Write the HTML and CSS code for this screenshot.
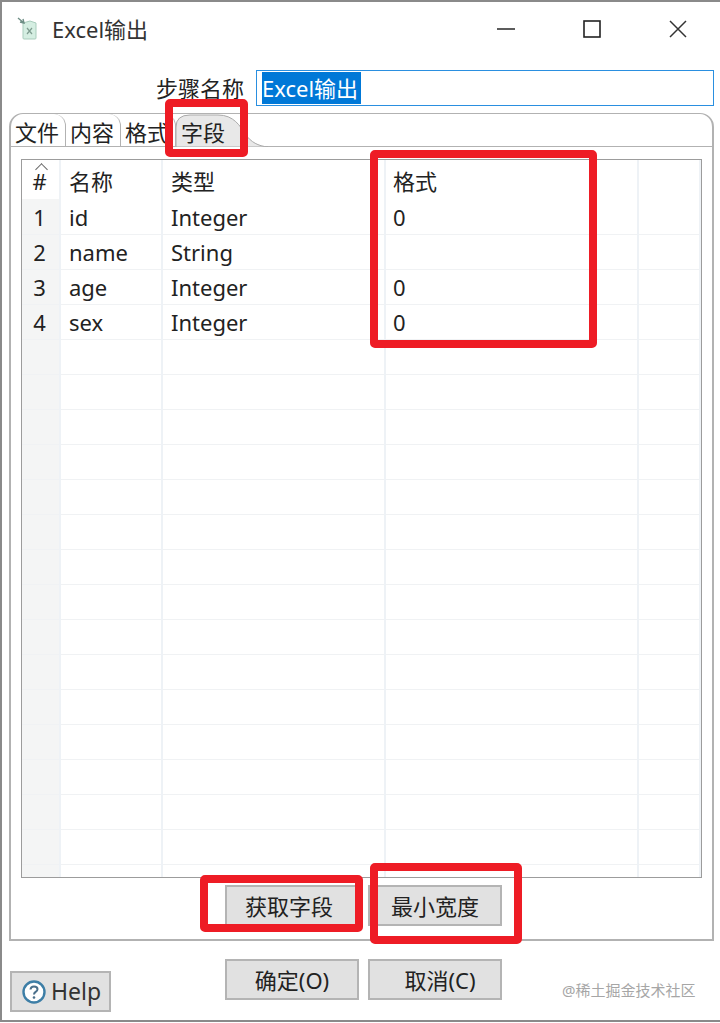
FILE: index.html
```html
<!DOCTYPE html>
<html lang="zh-CN">
<head>
    <meta charset="UTF-8">
    <title>Excel输出</title>
    <link rel="stylesheet" href="styles.css">
</head>
<body>
    <div class="window">
        <div class="titlebar">
            <svg class="app-icon" width="22" height="24" viewBox="0 0 22 24">
                <path d="M6 6 L13 4 L19 6 V21 Q19 22 18 22 H7 Q6 22 6 21 Z" fill="#d5eee2" stroke="#a9cdbd"/>
                <path d="M1 1 L7 6 M3 5 L7 6 L6 2" fill="none" stroke="#6f8f86" stroke-width="1.4"/>
                <path d="M10 11 L15 17 M15 11 L10 17" stroke="#7f9c90" stroke-width="1.2"/>
            </svg>
            <span class="title">Excel输出</span>
            <div class="win-controls">
                <svg width="18" height="18" viewBox="0 0 18 18"><path d="M0 9 H18" stroke="#333" stroke-width="1.6"/></svg>
                <svg width="18" height="18" viewBox="0 0 18 18"><rect x="1" y="1" width="16" height="16" fill="none" stroke="#222" stroke-width="1.6"/></svg>
                <svg width="18" height="18" viewBox="0 0 18 18"><path d="M1 1 L17 17 M17 1 L1 17" stroke="#333" stroke-width="1.5"/></svg>
            </div>
        </div>

        <div class="name-row">
            <label class="name-label">步骤名称</label>
            <div class="name-input"><span class="selected">Excel输出</span></div>
        </div>

        <div class="folder">
            <div class="tabs">
                <div class="tab">文件</div>
                <div class="tab">内容</div>
                <div class="tab">格式</div>
                <div class="tab tab-active">
                    <svg class="tab-shape" width="92" height="33" viewBox="0 0 92 33">
                        <path d="M0 33 V13 Q0 1 14 1 H42 C58 1 64 12 70 21 C75 28 82 32 92 33 Z" fill="#e8e8e8" stroke="#aaa"/>
                    </svg>
                    <span class="tab-text">字段</span>
                </div>
            </div>

            <div class="grid-box">
                <table class="grid">
                    <colgroup>
                        <col class="col-num">
                        <col class="col-name">
                        <col class="col-type">
                        <col class="col-format">
                        <col>
                    </colgroup>
                    <thead>
                        <tr>
                            <th class="num"><span class="sort-arrow"></span>#</th>
                            <th>名称</th>
                            <th>类型</th>
                            <th>格式</th>
                            <th></th>
                        </tr>
                    </thead>
                    <tbody>
                        <tr><td class="num">1</td><td>id</td><td>Integer</td><td>0</td><td></td></tr>
                        <tr><td class="num">2</td><td>name</td><td>String</td><td></td><td></td></tr>
                        <tr><td class="num">3</td><td>age</td><td>Integer</td><td>0</td><td></td></tr>
                        <tr><td class="num">4</td><td>sex</td><td>Integer</td><td>0</td><td></td></tr>
                        <tr><td class="num"></td><td></td><td></td><td></td><td></td></tr>
                        <tr><td class="num"></td><td></td><td></td><td></td><td></td></tr>
                        <tr><td class="num"></td><td></td><td></td><td></td><td></td></tr>
                        <tr><td class="num"></td><td></td><td></td><td></td><td></td></tr>
                        <tr><td class="num"></td><td></td><td></td><td></td><td></td></tr>
                        <tr><td class="num"></td><td></td><td></td><td></td><td></td></tr>
                        <tr><td class="num"></td><td></td><td></td><td></td><td></td></tr>
                        <tr><td class="num"></td><td></td><td></td><td></td><td></td></tr>
                        <tr><td class="num"></td><td></td><td></td><td></td><td></td></tr>
                        <tr><td class="num"></td><td></td><td></td><td></td><td></td></tr>
                        <tr><td class="num"></td><td></td><td></td><td></td><td></td></tr>
                        <tr><td class="num"></td><td></td><td></td><td></td><td></td></tr>
                        <tr><td class="num"></td><td></td><td></td><td></td><td></td></tr>
                        <tr><td class="num"></td><td></td><td></td><td></td><td></td></tr>
                        <tr><td class="num"></td><td></td><td></td><td></td><td></td></tr>
                        <tr><td class="num"></td><td></td><td></td><td></td><td></td></tr>
                    </tbody>
                </table>
            </div>

            <div class="folder-buttons">
                <button class="btn btn-fetch">获取字段</button>
                <button class="btn">最小宽度</button>
            </div>
        </div>

        <div class="footer">
            <button class="btn help-btn">
                <svg width="26" height="26" viewBox="0 0 26 26">
                    <circle cx="13" cy="13" r="10.5" fill="#fff" stroke="#3d7ea6" stroke-width="2.4"/>
                    <path d="M9.5 10.5 Q9.8 7.5 13 7.5 Q16.5 7.5 16.5 10.2 Q16.5 12 14.5 13 Q13 13.8 13 15.5" fill="none" stroke="#4a6f8a" stroke-width="2"/>
                    <circle cx="13" cy="18.5" r="1.3" fill="#4a6f8a"/>
                </svg>
                <span>Help</span>
            </button>
            <div class="footer-actions">
                <button class="btn">确定(O)</button>
                <button class="btn btn-cancel">取消(C)</button>
            </div>
            <span class="watermark">@稀土掘金技术社区</span>
        </div>

        <!-- red annotation boxes -->
        <div class="mark mark-tab"></div>
        <div class="mark mark-format"></div>
        <div class="mark mark-fetch"></div>
        <div class="mark mark-width"></div>
    </div>
</body>
</html>
```

FILE: styles.css
```css
* {
    box-sizing: border-box;
}
body {
    margin: 0;
    background-color: #fff;
    font-family: "Noto Sans", "Noto Sans CJK SC", sans-serif;
    color: #222;
}
.window {
    position: relative;
    width: 720px;
    height: 1022px;
    border-top: 2px solid #8a8a8a;
    border-left: 2px solid #8a8a8a;
    border-bottom: 2px solid #8a8a8a;
    overflow: hidden;
}
.titlebar {
    display: flex;
    align-items: center;
    height: 54px;
    padding-left: 15px;
}
.app-icon {
    flex: none;
}
.title {
    margin-left: 13px;
    font-size: 22px;
    line-height: 30px;
    color: #333;
}
.win-controls {
    display: flex;
    gap: 68px;
    margin-left: auto;
    padding-right: 33px;
}
.name-row {
    display: flex;
    align-items: center;
    height: 36px;
    margin-top: 14px;
    padding-left: 154px;
}
.name-label {
    width: 88px;
    font-size: 22px;
    line-height: 28px;
    white-space: nowrap;
}
.name-input {
    display: flex;
    align-items: center;
    width: 458px;
    height: 36px;
    margin-left: 12px;
    padding-left: 5px;
    border: 1px solid #2a8fe0;
}
.selected {
    display: block;
    width: 99px;
    height: 32px;
    background-color: #0078d7;
    color: #fff;
    font-size: 22px;
    line-height: 32px;
    white-space: nowrap;
}
.folder {
    width: 705px;
    height: 828px;
    margin-top: 7px;
    margin-left: 7px;
    border: 2px solid #b2b2b2;
    border-top-width: 1px;
    border-radius: 14px 14px 0 0;
}
.tabs {
    display: flex;
    height: 33px;
    border-bottom: 1px solid #b2b2b2;
}
.tab {
    width: 55px;
    height: 33px;
    padding-left: 4px;
    border-right: 1px solid #b2b2b2;
    border-radius: 0 12px 0 0;
    font-size: 22px;
    line-height: 36px;
    white-space: nowrap;
}
.tab-active {
    position: relative;
    width: 92px;
    padding-left: 5px;
    border-right: 0;
}
.tab-shape {
    position: absolute;
    top: 0;
    left: 0;
}
.tab-text {
    position: relative;
}
.grid-box {
    height: 719px;
    margin: 12px 10px 0;
    border: 1px solid #9c9c9c;
    overflow: hidden;
}
.grid {
    width: 100%;
    border-collapse: collapse;
    table-layout: fixed;
    font-size: 22px;
    line-height: 30px;
}
.col-num {
    width: 38px;
}
.col-name {
    width: 102px;
}
.col-type {
    width: 223px;
}
.col-format {
    width: 253px;
}
.grid th,
.grid td {
    padding: 0 0 0 8px;
    border-right: 2px solid #eef2f6;
    text-align: left;
    font-weight: 400;
}
.grid th {
    position: relative;
    height: 39px;
    padding-top: 2px;
}
.grid td {
    height: 35px;
    padding-top: 1px;
    border-bottom: 1px solid #f0f2f4;
}
.grid th:nth-child(4),
.grid td:nth-child(4) {
    padding-left: 7px;
}
.grid .num {
    padding-left: 0;
    padding-right: 2px;
    text-align: center;
}
.grid td.num {
    background-color: #f4f5f5;
}
.sort-arrow {
    position: absolute;
    top: 5px;
    left: 15px;
    width: 9px;
    height: 9px;
    border-top: 1px solid #666;
    border-left: 1px solid #666;
    transform: rotate(45deg);
}
.folder-buttons {
    display: flex;
    gap: 9px;
    margin-top: 7px;
    padding-left: 214px;
}
.btn {
    width: 134px;
    height: 41px;
    padding: 0;
    border: 2px solid #b4b4b4;
    background-color: #e1e1e1;
    color: #222;
    font-family: inherit;
    font-size: 22px;
    line-height: 1;
}
.btn-fetch {
    padding-right: 6px;
}
.btn-cancel {
    padding-left: 10px;
}
.footer {
    display: flex;
    align-items: flex-start;
    height: 80px;
    padding-left: 8px;
}
.help-btn {
    display: flex;
    align-items: center;
    gap: 4px;
    width: 101px;
    margin-top: 30px;
    padding-left: 9px;
    font-size: 23px;
    color: #333;
}
.footer-actions {
    display: flex;
    gap: 9px;
    margin-top: 18px;
    margin-left: 114px;
}
.watermark {
    margin-top: 38px;
    margin-left: 60px;
    color: #a6a6a6;
    font-size: 15px;
    white-space: nowrap;
}
.mark {
    position: absolute;
    border: 8px solid #ee1c25;
    border-radius: 5px;
}
.mark-tab {
    top: 97px;
    left: 163px;
    width: 83px;
    height: 58px;
}
.mark-format {
    top: 148px;
    left: 368px;
    width: 227px;
    height: 198px;
}
.mark-fetch {
    top: 873px;
    left: 198px;
    width: 163px;
    height: 57px;
}
.mark-width {
    top: 861px;
    left: 368px;
    width: 152px;
    height: 81px;
}
```
